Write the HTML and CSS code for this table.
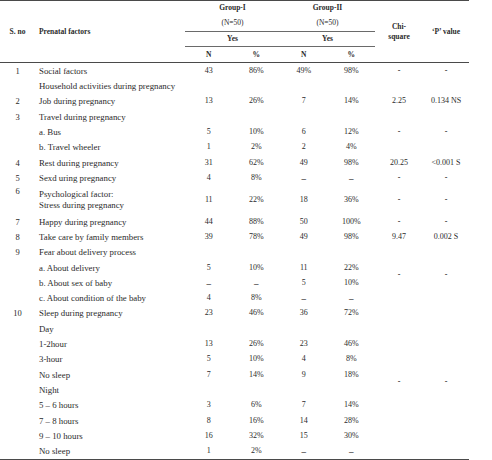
FILE: index.html
```html
<!DOCTYPE html>
<html lang="en">
<head>
  <meta charset="UTF-8">
  <title>Prenatal factors</title>
  <link rel="stylesheet" href="styles.css">
</head>
<body>
<table class="data-table">
  <colgroup>
    <col class="col-no">
    <col class="col-factor">
    <col class="col-num">
    <col class="col-num">
    <col class="col-num">
    <col class="col-num">
    <col class="col-chi">
    <col class="col-p">
  </colgroup>
  <thead>
    <tr>
      <th rowspan="4" class="head-main">S. no</th>
      <th rowspan="4" class="head-main head-left">Prenatal factors</th>
      <th colspan="2">Group-I</th>
      <th colspan="2">Group-II</th>
      <th rowspan="4" class="head-main">Chi-<br>square</th>
      <th rowspan="4" class="head-main">‘P’ value</th>
    </tr>
    <tr class="rule-row">
      <th colspan="2" class="light">(N=50)</th>
      <th colspan="2" class="light">(N=50)</th>
    </tr>
    <tr class="rule-row">
      <th colspan="2">Yes</th>
      <th colspan="2">Yes</th>
    </tr>
    <tr class="last-head">
      <th>N</th>
      <th>%</th>
      <th>N</th>
      <th>%</th>
    </tr>
  </thead>
  <tbody>
    <tr>
      <td class="no">1</td><td class="label">Social factors</td>
      <td>43</td><td>86%</td><td>49%</td><td>98%</td><td class="dash">-</td><td class="dash">-</td>
    </tr>
    <tr>
      <td class="no"></td><td class="label">Household activities during pregnancy</td>
      <td></td><td></td><td></td><td></td><td></td><td></td>
    </tr>
    <tr>
      <td class="no">2</td><td class="label">Job during pregnancy</td>
      <td>13</td><td>26%</td><td>7</td><td>14%</td><td>2.25</td><td>0.134 NS</td>
    </tr>
    <tr>
      <td class="no">3</td><td class="label">Travel during pregnancy</td>
      <td></td><td></td><td></td><td></td><td></td><td></td>
    </tr>
    <tr>
      <td class="no"></td><td class="label">a. Bus</td>
      <td>5</td><td>10%</td><td>6</td><td>12%</td><td class="dash">-</td><td class="dash">-</td>
    </tr>
    <tr>
      <td class="no"></td><td class="label">b. Travel wheeler</td>
      <td>1</td><td>2%</td><td>2</td><td>4%</td><td></td><td></td>
    </tr>
    <tr>
      <td class="no">4</td><td class="label">Rest during pregnancy</td>
      <td>31</td><td>62%</td><td>49</td><td>98%</td><td>20.25</td><td>&lt;0.001 S</td>
    </tr>
    <tr>
      <td class="no">5</td><td class="label">Sexd uring pregnancy</td>
      <td>4</td><td>8%</td><td class="nil">–</td><td class="nil">–</td><td class="dash">-</td><td class="dash">-</td>
    </tr>
    <tr class="tall">
      <td class="no top">6</td><td class="label">Psychological factor:<br>Stress during pregnancy</td>
      <td>11</td><td>22%</td><td>18</td><td>36%</td><td class="dash">-</td><td class="dash">-</td>
    </tr>
    <tr>
      <td class="no">7</td><td class="label">Happy during pregnancy</td>
      <td>44</td><td>88%</td><td>50</td><td>100%</td><td class="dash">-</td><td class="dash">-</td>
    </tr>
    <tr>
      <td class="no">8</td><td class="label">Take care by family members</td>
      <td>39</td><td>78%</td><td>49</td><td>98%</td><td>9.47</td><td>0.002 S</td>
    </tr>
    <tr>
      <td class="no">9</td><td class="label">Fear about delivery process</td>
      <td></td><td></td><td></td><td></td><td rowspan="4" class="dash">-</td><td rowspan="4" class="dash">-</td>
    </tr>
    <tr>
      <td class="no"></td><td class="label">a. About delivery</td>
      <td>5</td><td>10%</td><td>11</td><td>22%</td>
    </tr>
    <tr>
      <td class="no"></td><td class="label">b. About sex of baby</td>
      <td class="nil">–</td><td class="nil">–</td><td>5</td><td>10%</td>
    </tr>
    <tr>
      <td class="no"></td><td class="label">c. About condition of the baby</td>
      <td>4</td><td>8%</td><td class="nil">–</td><td class="nil">–</td>
    </tr>
    <tr>
      <td class="no">10</td><td class="label">Sleep during pregnancy</td>
      <td>23</td><td>46%</td><td>36</td><td>72%</td><td rowspan="10" class="dash">-</td><td rowspan="10" class="dash">-</td>
    </tr>
    <tr>
      <td class="no"></td><td class="label">Day</td>
      <td></td><td></td><td></td><td></td>
    </tr>
    <tr>
      <td class="no"></td><td class="label">1-2hour</td>
      <td>13</td><td>26%</td><td>23</td><td>46%</td>
    </tr>
    <tr>
      <td class="no"></td><td class="label">3-hour</td>
      <td>5</td><td>10%</td><td>4</td><td>8%</td>
    </tr>
    <tr>
      <td class="no"></td><td class="label">No sleep</td>
      <td>7</td><td>14%</td><td>9</td><td>18%</td>
    </tr>
    <tr>
      <td class="no"></td><td class="label">Night</td>
      <td></td><td></td><td></td><td></td>
    </tr>
    <tr>
      <td class="no"></td><td class="label">5 – 6 hours</td>
      <td>3</td><td>6%</td><td>7</td><td>14%</td>
    </tr>
    <tr>
      <td class="no"></td><td class="label">7 – 8 hours</td>
      <td>8</td><td>16%</td><td>14</td><td>28%</td>
    </tr>
    <tr>
      <td class="no"></td><td class="label">9 – 10 hours</td>
      <td>16</td><td>32%</td><td>15</td><td>30%</td>
    </tr>
    <tr>
      <td class="no"></td><td class="label">No sleep</td>
      <td>1</td><td>2%</td><td class="nil">–</td><td class="nil">–</td>
    </tr>
  </tbody>
</table>
</body>
</html>
```

FILE: styles.css
```css
body {
  margin: 0;
  padding: 0;
  background-color: #ffffff;
  color: #2b2b2b;
  font-family: "Liberation Serif", "Times New Roman", serif;
}

.data-table {
  border-collapse: collapse;
  table-layout: fixed;
  width: 469px;
  font-size: 8px;
  border-top: 1.5px solid #4a4a4a;
  border-bottom: 1.5px solid #4a4a4a;
}

.col-no { width: 35px; }
.col-factor { width: 150px; }
.col-num { width: 47.5px; }
.col-chi { width: 48px; }
.col-p { width: 46px; }

th, td {
  padding: 0;
  text-align: center;
  vertical-align: middle;
  white-space: nowrap;
}

/* header */
th {
  height: 14.8px;
  font-size: 7.5px;
  font-weight: bold;
  line-height: 10px;
}

th.light {
  font-weight: normal;
}

.head-main {
  border-bottom: 1.5px solid #4a4a4a;
}

.head-left {
  text-align: left;
  padding-left: 4px;
}

.rule-row th {
  border-bottom: 1.5px solid #6a6a6a;
}

.last-head th {
  border-bottom: 1.5px solid #4a4a4a;
}

/* body */
td {
  height: 15.3px;
  line-height: 10px;
}

td.label {
  text-align: left;
  padding-left: 4px;
  font-size: 8.8px;
}

td.no {
  font-size: 8.5px;
}

.tall td {
  height: 28.5px;
  line-height: 11px;
}

.tall td.no.top {
  vertical-align: top;
}

td.dash {
  font-weight: bold;
}

td.nil {
  font-weight: bold;
  font-size: 9px;
}
```
